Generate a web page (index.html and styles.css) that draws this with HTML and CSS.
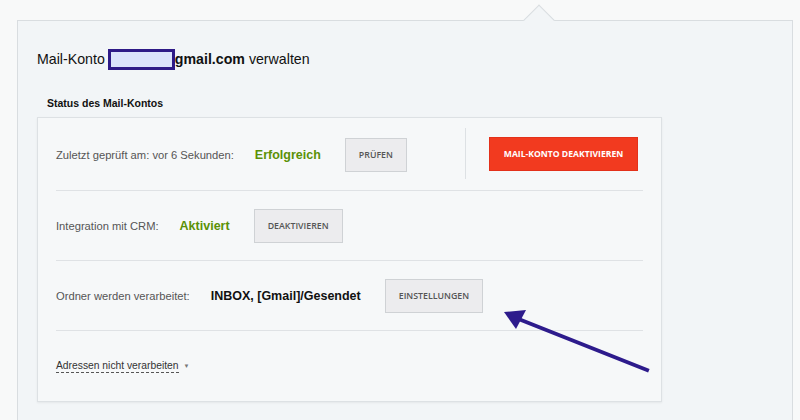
FILE: index.html
```
<!DOCTYPE html>
<html lang="de">
<head>
    <meta charset="UTF-8">
    <title>Mail-Konto verwalten</title>
    <link rel="stylesheet" href="styles.css">
</head>
<body>
    <div class="panel">
        <h1 class="title">Mail-Konto <span class="masked"></span><b>gmail.com</b> verwalten</h1>
        <h2 class="subtitle">Status des Mail-Kontos</h2>
        <div class="card">
            <div class="row row-first">
                <span class="label">Zuletzt geprüft am: vor 6 Sekunden:</span>
                <span class="value ok">Erfolgreich</span>
                <button class="btn">Prüfen</button>
                <div class="row-side">
                    <button class="btn btn-red">Mail-Konto deaktivieren</button>
                </div>
            </div>
            <div class="row">
                <span class="label">Integration mit CRM:</span>
                <span class="value ok">Aktiviert</span>
                <button class="btn">Deaktivieren</button>
            </div>
            <div class="row">
                <span class="label">Ordner werden verarbeitet:</span>
                <span class="value">INBOX, [Gmail]/Gesendet</span>
                <button class="btn">Einstellungen</button>
            </div>
            <div class="row row-last">
                <span class="dropdown">Adressen nicht verarbeiten</span>
                <span class="caret">&#9660;</span>
            </div>
        </div>
        <svg class="pointer" width="800" height="420" viewBox="0 0 800 420">
            <line x1="647" y1="370" x2="516" y2="318" stroke="#2d1b8c" stroke-width="4" stroke-linecap="square"/>
            <polygon points="504,312 526,310 516,329" fill="#2d1b8c"/>
        </svg>
    </div>
</body>
</html>
```

FILE: styles.css
```
body {margin: 0; background: #f8f9f9; font-family: "Liberation Sans", Arial, sans-serif; color: #222; overflow: hidden; height: 420px;}
.panel {position: relative; margin: 20px 7px 0 17px; height: 400px; background: #f2f5f7; border: 1px solid #d9dde0; border-bottom: 0; box-sizing: border-box; padding: 27px 20px 0 19px;}
.panel::before {content: ""; position: absolute; left: 510px; top: -12px; width: 21px; height: 21px; background: #f2f5f7; border-top: 1px solid #d9dde0; border-left: 1px solid #d9dde0; transform: rotate(45deg);}
.title {font-size: 14.2px; font-weight: normal; margin: 0; line-height: 22px; color: #111;}
.title b {color: #111;}
.masked {display: inline-block; width: 61px; height: 15px; background: #dbe3fb; border: 3px solid #2e1a87; vertical-align: -6px; margin-left: -1px;}
.subtitle {font-size: 10.5px; font-weight: bold; margin: 26px 0 0 10px; line-height: 14px; color: #111;}
.card {margin-top: 7px; width: 625px; box-sizing: border-box; background: #f6f8f9; border: 1px solid #dde1e4; box-shadow: 0 1px 2px rgba(0,0,0,0.06); padding: 0 18px;}
.row {display: flex; align-items: center; padding: 18px 0 17px; border-bottom: 1px solid #dfe2e5;}
.row-first {padding: 20px 0 18px;}
.row-last {border-bottom: 0; padding: 28px 0 28px;}
.label {font-size: 11.2px; color: #555; margin-right: 21px; line-height: 14px;}
.value {font-size: 12.5px; font-weight: bold; color: #111; margin-right: 24px;}
.value.ok {color: #5a9106;}
.btn {font-family: "Open Sans", sans-serif; font-size: 8.8px; font-weight: 600; text-transform: uppercase; letter-spacing: 0; color: #555; background: #ececee; border: 1px solid #cfd2d5; height: 34px; padding: 0 13px; box-sizing: border-box; white-space: nowrap;}
.row-side {margin-left: auto; margin-right: 5px; display: flex; align-items: center; align-self: stretch; margin-top: -10px; margin-bottom: -7px; border-left: 1px solid #dde1e4; padding-left: 23px;}
.btn-red {background: #f23a1f; border-color: #e3311a; color: #fff; font-weight: 700; font-size: 8.6px; padding: 0; width: 149px;}
.dropdown {font-size: 10.3px; color: #333; border-bottom: 1px dashed #555; line-height: 13px;}
.caret {font-size: 6px; color: #777; margin-left: 5px;}
.pointer {position: absolute; left: -18px; top: -21px;}
```
